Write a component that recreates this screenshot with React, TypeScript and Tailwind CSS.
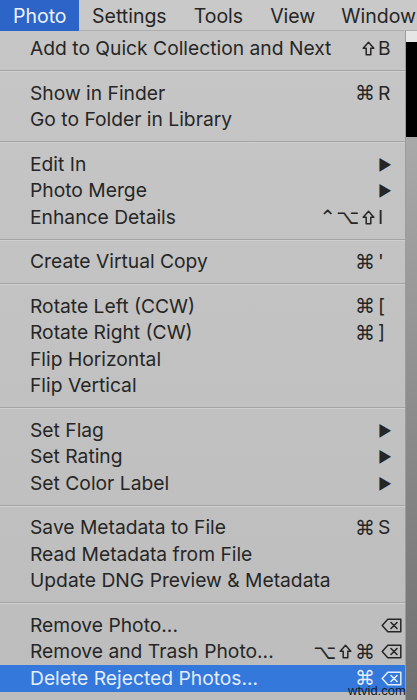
import type { ReactNode } from "react";

type Item = { label: string; mods?: ReactNode; key?: ReactNode; sub?: boolean; active?: boolean };

function ShiftIcon() {
  return (
    <svg width="13" height="15" viewBox="0 0 13 15" className="inline-block">
      <path
        d="M6.5 1.2 L11.8 7.2 H8.8 V13.8 H4.2 V7.2 H1.2 Z"
        fill="none"
        stroke="currentColor"
        strokeWidth="1.5"
        strokeLinejoin="round"
      />
    </svg>
  );
}

function DeleteIcon() {
  return (
    <svg width="21" height="15" viewBox="0 0 21 15" className="inline-block">
      <path
        d="M1.2 7.5 L6.8 1.2 H19.8 V13.8 H6.8 Z"
        fill="none"
        stroke="currentColor"
        strokeWidth="1.5"
        strokeLinejoin="round"
      />
      <path d="M10 4.5 L16 10.5 M16 4.5 L10 10.5" stroke="currentColor" strokeWidth="1.6" strokeLinecap="round" />
    </svg>
  );
}

const groups: Item[][] = [
  [{ label: "Add to Quick Collection and Next", mods: <ShiftIcon />, key: "B" }],
  [
    { label: "Show in Finder", mods: "⌘", key: "R" },
    { label: "Go to Folder in Library" },
  ],
  [
    { label: "Edit In", sub: true },
    { label: "Photo Merge", sub: true },
    {
      label: "Enhance Details",
      mods: (
        <>
          ⌃⌥<ShiftIcon />
        </>
      ),
      key: "I",
    },
  ],
  [{ label: "Create Virtual Copy", mods: "⌘", key: "'" }],
  [
    { label: "Rotate Left (CCW)", mods: "⌘", key: "[" },
    { label: "Rotate Right (CW)", mods: "⌘", key: "]" },
    { label: "Flip Horizontal" },
    { label: "Flip Vertical" },
  ],
  [
    { label: "Set Flag", sub: true },
    { label: "Set Rating", sub: true },
    { label: "Set Color Label", sub: true },
  ],
  [
    { label: "Save Metadata to File", mods: "⌘", key: "S" },
    { label: "Read Metadata from File" },
    { label: "Update DNG Preview & Metadata" },
  ],
  [
    { label: "Remove Photo...", key: <DeleteIcon /> },
    {
      label: "Remove and Trash Photo...",
      mods: (
        <>
          ⌥<ShiftIcon />⌘
        </>
      ),
      key: <DeleteIcon />,
    },
    { label: "Delete Rejected Photos...", mods: "⌘", key: <DeleteIcon />, active: true },
  ],
];

const font = "font-['Inter','Liberation_Sans','DejaVu_Sans',sans-serif]";
const glyph = "font-['DejaVu_Sans','Liberation_Sans',sans-serif]";

function Row({ item }: { item: Item }) {
  const isIcon = typeof item.key !== "string" && item.key !== undefined;
  return (
    <div
      className={`flex h-[26.5px] items-center pl-[30px] pr-[2px] ${
        item.active ? "bg-[#3478dc] text-[#e3edff]" : "text-[#262626]"
      }`}
    >
      <span className="flex-1 whitespace-nowrap text-[19.25px] leading-none">{item.label}</span>
      <span className={`${glyph} flex items-center gap-[3px] whitespace-nowrap text-[20px] leading-none`}>
        {item.mods}
      </span>
      <span className="flex w-[28px] items-center pl-[3px] text-[19.25px] leading-none">
        {item.sub ? (
          <span className="text-[15px]">▶</span>
        ) : isIcon ? (
          <span className="flex pl-[3px]">{item.key}</span>
        ) : (
          item.key
        )}
      </span>
    </div>
  );
}

function Separator() {
  return (
    <div className="flex h-[18px] flex-col justify-center">
      <div className="h-px bg-[#a4a4a4]" />
      <div className="h-px bg-[#cfcfcf]" />
    </div>
  );
}

export default function App() {
  return (
    <div className={`${font} relative h-[700px] w-[417px] overflow-hidden bg-[#c3c3c3]`}>
      <div className="flex h-[31px] items-center border-b border-[#b0b0b0] bg-[#c9c9c9] pt-[3px] text-[19.5px] text-[#262626]">
        <div className="-mt-[3px] flex h-[31px] w-[79px] items-center bg-[#2c64c8] pl-[13px] pt-[3px] text-[#eef3ff]">
          Photo
        </div>
        <span className="ml-[13px]">Settings</span>
        <span className="ml-[27px]">Tools</span>
        <span className="ml-[27px]">View</span>
        <span className="ml-[26px]">Window</span>
      </div>

      <div className="flex h-[669px]">
        <div className="flex w-[406px] flex-col border-r border-[#9c9c9c] bg-gradient-to-b from-[#c6c6c6] to-[#bdbdbd] pt-[4.5px]">
          {groups.map((g, gi) => (
            <div key={gi}>
              {gi > 0 && <Separator />}
              {g.map((it) => (
                <Row key={it.label} item={it} />
              ))}
            </div>
          ))}
        </div>
        <div className="flex w-[11px] flex-col">
          <div className="h-[11px] bg-[#e6e6e6]" />
          <div className="h-[95px] bg-black" />
          <div className="flex-1 bg-gradient-to-b from-[#a9a9a9] to-[#707070]" />
        </div>
      </div>

      <span className="absolute left-[348px] top-[684px] font-['Liberation_Sans',sans-serif] text-[13px] leading-none text-[#1a1a1a]">
        wtvid.com
      </span>
    </div>
  );
}
